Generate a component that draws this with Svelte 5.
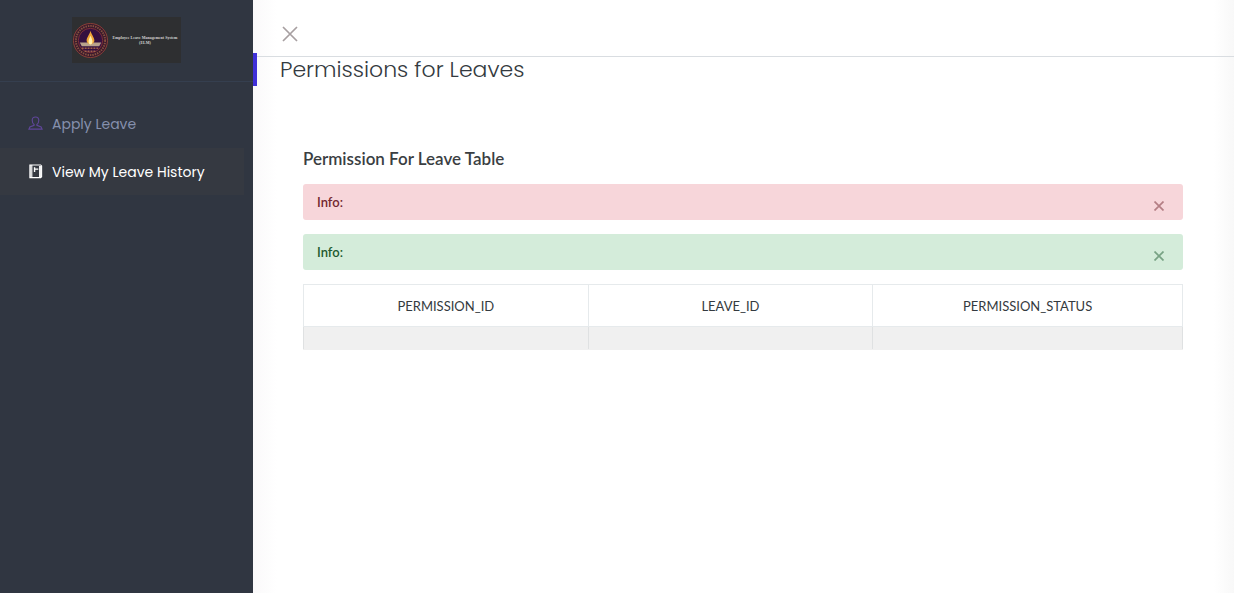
<script>
  let showDanger = $state(true);
  let showSuccess = $state(true);
  const columns = ['PERMISSION_ID', 'LEAVE_ID', 'PERMISSION_STATUS'];
</script>

<div class="layout">
  <aside class="sidebar">
    <div class="brand">
      <a class="logo" href="#home">
        <svg class="seal" viewBox="0 0 38 38" aria-hidden="true">
          <circle cx="19" cy="19" r="17.5" fill="#3a1a2c" stroke="#8a4038" stroke-width="1" />
          <circle cx="19" cy="19" r="15" fill="none" stroke="#84503f" stroke-width="2" stroke-dasharray="1.5 1" />
          <circle cx="19" cy="19" r="12.5" fill="#35103f" stroke="#7c3038" stroke-width="1" />
          <path d="M8 21h22l-2 4H10z" fill="#b9a28c" />
          <path d="M19 9c1 4 4 7 4 10 0 2-2 4-4 4s-4-2-4-4c0-3 3-6 4-10z" fill="#f0a637" />
          <path d="M19 14c1 2 2 4 2 6s-1 3-2 3-2-1-2-3 1-4 2-6z" fill="#fff0b0" />
          <path d="M10 27h18M13 30h12" stroke="#a06048" stroke-width="1.5" stroke-dasharray="2 1" />
        </svg>
        <span class="logo-text">Employee Leave Management System<br />(ELM)</span>
      </a>
    </div>
    <nav class="menu">
      <a class="item" href="#apply">
        <svg class="icon user" viewBox="0 0 16 16" fill="none" stroke="currentColor" stroke-width="1.200" aria-hidden="true">
          <path d="M6.500 10v-1C5 8 4.500 6.500 4.500 4.500 4.500 2 6 1 8 1s3.500 1 3.500 3.500c0 2-.5 3.500-2 4.500v1l4.500 1.700 1 2.300H1l1-2.300z" />
        </svg>
        <span>Apply Leave</span>
      </a>
      <a class="item active" href="#history">
        <svg class="icon" viewBox="0 0 16 16" fill="none" stroke="currentColor" aria-hidden="true">
          <path d="M2 1h11.500l1 1v11.500l-1 1H2z" stroke-width="1.200" />
          <path d="M3.500 1v13.500" stroke-width="2.500" opacity=".8" />
          <path d="M12.800 2v12" stroke-width="2" />
          <path d="M7 3.500v5M7 5.500h4" stroke-width="1.500" />
        </svg>
        <span>View My Leave History</span>
      </a>
    </nav>
  </aside>

  <main class="page">
    <header class="topbar">
      <button class="toggle" type="button" aria-label="Close menu">
        <svg viewBox="0 0 16 16" fill="none" stroke="currentColor" stroke-width="1.700" aria-hidden="true">
          <path d="M1 1l14 14M15 1L1 15" />
        </svg>
      </button>
    </header>
    <h1>Permissions for Leaves</h1>

    <section class="content">
      <h2>Permission For Leave Table</h2>
      {#if showDanger}
        <div class="alert danger" role="alert">
          <strong>Info:</strong>
          <button type="button" aria-label="Dismiss" onclick={() => (showDanger = false)}>
            <svg viewBox="0 0 10 10" fill="none" stroke="currentColor" stroke-width="1.700" aria-hidden="true"><path d="M.5.5l9 9M9.500.5l-9 9" /></svg>
          </button>
        </div>
      {/if}
      {#if showSuccess}
        <div class="alert success" role="alert">
          <strong>Info:</strong>
          <button type="button" aria-label="Dismiss" onclick={() => (showSuccess = false)}>
            <svg viewBox="0 0 10 10" fill="none" stroke="currentColor" stroke-width="1.700" aria-hidden="true"><path d="M.5.5l9 9M9.500.5l-9 9" /></svg>
          </button>
        </div>
      {/if}
      <table>
        <thead>
          <tr>{#each columns as column}<th scope="col">{column}</th>{/each}</tr>
        </thead>
        <tbody>
          <tr>{#each columns as column}<td></td>{/each}</tr>
        </tbody>
      </table>
    </section>
  </main>
</div>

<style>
  :global(body) {
    margin: 0;
    background: #fff;
  }
  .layout {
    display: flex;
    min-height: 100vh;
    font-family: Lato, sans-serif;
    color: #343a40;
  }
  .layout :is(a, button) {
    box-sizing: border-box;
  }
  .sidebar {
    flex: 0 0 253px;
    background: #303641;
    font-family: Poppins, Inter, sans-serif;
  }
  .brand {
    display: flex;
    justify-content: center;
    padding: 17px 0 18px;
    border-bottom: 1px solid #353f4f;
  }
  .logo {
    display: flex;
    align-items: center;
    width: 109px;
    height: 46px;
    background: #2e2f31;
    text-decoration: none;
  }
  .seal {
    flex: 0 0 37px;
    height: 37px;
  }
  .logo-text {
    flex: 1;
    font: bold 4px/5px "Liberation Serif", serif;
    text-align: center;
    white-space: nowrap;
    color: #d0d0d0;
  }
  .menu {
    padding: 18px 9px 0 0;
  }
  .item {
    display: flex;
    align-items: center;
    gap: 9px;
    height: 47px;
    margin-bottom: 1px;
    padding-left: 28px;
    font-size: 14px;
    line-height: 24px;
    color: #8590ad;
    text-decoration: none;
  }
  .active {
    background: #353941;
    color: #fff;
  }
  .icon {
    width: 15px;
    height: 15px;
  }
  .user {
    color: #5f4699;
  }
  .page {
    flex: 1;
    min-width: 0;
    background: linear-gradient(90deg, #faf9fa, #fff 24px, #fff calc(100% - 20px), #f8f8f8);
  }
  .topbar {
    display: flex;
    align-items: center;
    height: 56px;
    padding-left: 29px;
    border-bottom: 1px solid #d9dde1;
  }
  .toggle {
    display: grid;
    padding: 12px 0 0;
    border: 0;
    background: none;
    color: #a79fa1;
  }
  .toggle svg {
    width: 16px;
    height: 16px;
  }
  h1 {
    margin: -4px 0 0;
    padding-left: 23px;
    border-left: 4px solid #4030d8;
    font: 300 22px/33px Poppins, Inter, sans-serif;
    color: #343a40;
  }
  .content {
    padding: 60px 51px 0 50px;
  }
  h2 {
    margin: 0 0 13px;
    font-size: 17px;
    line-height: 25px;
    font-weight: 600;
    color: #3a3e42;
  }
  .alert {
    display: flex;
    justify-content: space-between;
    box-sizing: border-box;
    height: 36px;
    margin-bottom: 14px;
    padding: 0 19px 0 14px;
    border-radius: 3px;
    font-size: 13px;
    line-height: 36px;
  }
  .alert strong {
    font-weight: 600;
  }
  .alert button {
    display: grid;
    place-items: center;
    padding: 8px 0 0;
    border: 0;
    background: none;
    color: inherit;
    opacity: 0.5;
  }
  .alert button svg {
    width: 10px;
    height: 10px;
  }
  .danger {
    background: #f7d6da;
    color: #732830;
  }
  .success {
    background: #d4ecda;
    color: #1e5a30;
  }
  table {
    width: 100%;
    border-collapse: collapse;
  }
  th,
  td {
    box-sizing: border-box;
    border: 1px solid #e6eaec;
    width: 285px;
  }
  th {
    height: 42px;
    padding: 0;
    font-size: 13px;
    line-height: 20px;
    font-weight: 400;
    text-align: center;
  }
  th:last-child {
    width: 310px;
  }
  td {
    height: 23px;
    padding: 0;
    background: #f0f0f0;
    border-color: #dfe1e2;
    border-bottom-color: #f0f0f0;
  }
</style>
